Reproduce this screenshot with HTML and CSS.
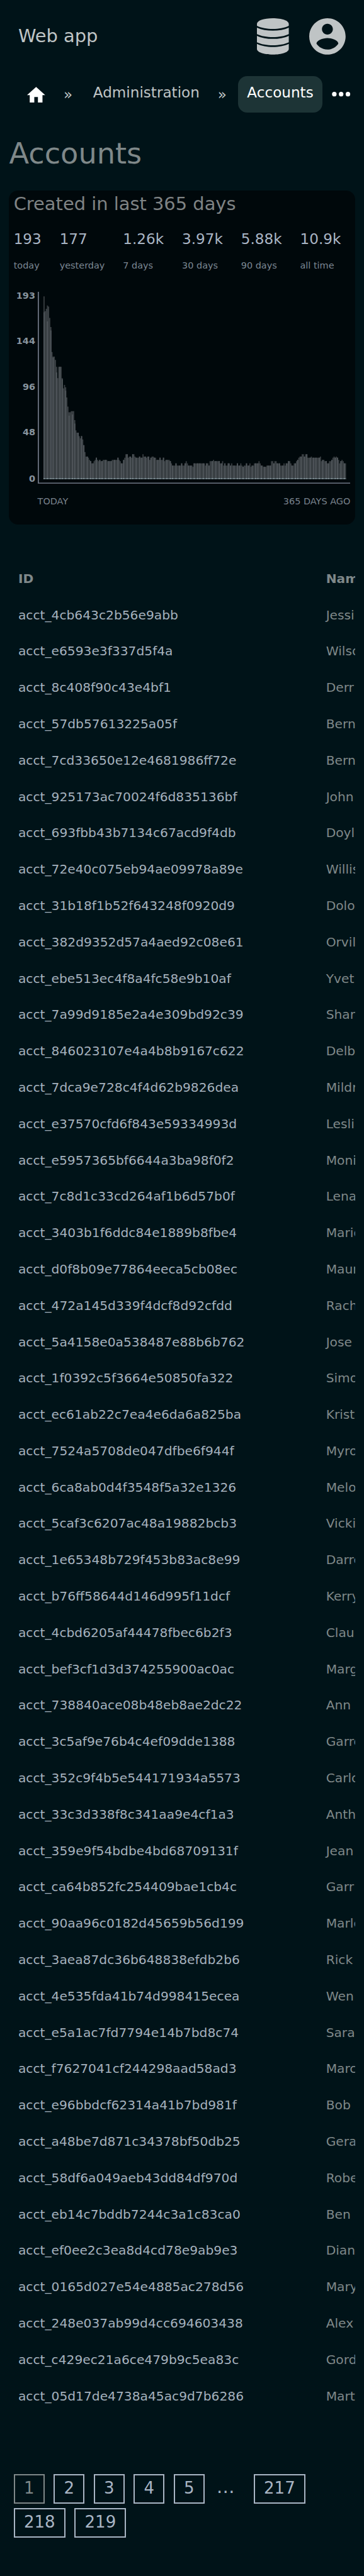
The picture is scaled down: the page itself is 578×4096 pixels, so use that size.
FILE: index.html
```html
<!DOCTYPE html>
<html lang="en">
<head>
<meta charset="utf-8">
<title>Accounts</title>
<link rel="stylesheet" href="styles.css">
</head>
<body>
<header class="topbar">
  <a class="brand">Web app</a>
  <nav class="topbar-icons">
    <svg class="icon-db" viewBox="0 0 56 64"><path d="M0 10C0 4.200 12 0 28 0s28 4.200 28 10v3.300C49 17 38 18.800 28 18.800S7 17 0 13.300zM0 16.600C8 20.300 18 21.900 28 21.900s20-1.600 28-5.300v11.300C49 31.400 38 33.200 28 33.200S7 31.400 0 27.900zM0 30.900C8 34.800 18 36.400 28 36.400s20-1.600 28-5.500v11.500C49 45.900 38 47.700 28 47.700S7 45.900 0 42.400zM0 45.200C8 49.100 18 50.700 28 50.700s20-1.600 28-5.500V54c0 5.800-12 10-28 10S0 59.800 0 54z"/></svg>
    <svg class="icon-user" viewBox="2 2 20 20"><path d="M12 2C6.480 2 2 6.480 2 12s4.480 10 10 10 10-4.480 10-10S17.520 2 12 2zm0 3c1.660 0 3 1.340 3 3s-1.340 3-3 3-3-1.340-3-3 1.340-3 3-3zm0 14.200c-2.500 0-4.710-1.280-6-3.220.030-1.990 4-3.080 6-3.080 1.990 0 5.970 1.090 6 3.080-1.290 1.940-3.500 3.220-6 3.220z"/></svg>
  </nav>
</header>
<nav class="crumbs">
  <a class="crumb-home"><svg viewBox="0 0 24 24"><path d="M10 20v-6h4v6h5v-8h3L12 3 2 12h3v8z"/></svg></a>
  <span class="sep">»</span>
  <a class="crumb">Administration</a>
  <span class="sep">»</span>
  <a class="crumb current">Accounts</a>
  <svg class="more" viewBox="0 0 24 24"><circle cx="6" cy="12" r="2"/><circle cx="12" cy="12" r="2"/><circle cx="18" cy="12" r="2"/></svg>
</nav>
<h1 class="title">Accounts</h1>
<section class="card">
  <h2 class="card-title">Created in last 365 days</h2>
  <div class="stats">
    <div class="stat"><b>193</b><span>today</span></div>
    <div class="stat"><b>177</b><span>yesterday</span></div>
    <div class="stat"><b>1.26k</b><span>7 days</span></div>
    <div class="stat"><b>3.97k</b><span>30 days</span></div>
    <div class="stat"><b>5.88k</b><span>90 days</span></div>
    <div class="stat"><b>10.9k</b><span>all time</span></div>
  </div>
  <div class="chart">
    <div class="y-labels"><span>193</span><span>144</span><span>96</span><span>48</span><span>0</span></div>
    <svg class="plot" id="plot" viewBox="0 0 550 338"></svg>
  </div>
  <div class="x-labels"><span>TODAY</span><span>365 DAYS AGO</span></div>
</section>
<div class="table-wrap">
<table class="table">
<thead><tr><th>ID</th><th>Name</th></tr></thead>
<tbody>
<tr><td>acct_4cb643c2b56e9abb</td><td>Jessi</td></tr>
<tr><td>acct_e6593e3f337d5f4a</td><td>Wilson</td></tr>
<tr><td>acct_8c408f90c43e4bf1</td><td>Derr</td></tr>
<tr><td>acct_57db57613225a05f</td><td>Bern</td></tr>
<tr><td>acct_7cd33650e12e4681986ff72e</td><td>Bern</td></tr>
<tr><td>acct_925173ac70024f6d835136bf</td><td>John</td></tr>
<tr><td>acct_693fbb43b7134c67acd9f4db</td><td>Doyl</td></tr>
<tr><td>acct_72e40c075eb94ae09978a89e</td><td>Willis</td></tr>
<tr><td>acct_31b18f1b52f643248f0920d9</td><td>Dolo</td></tr>
<tr><td>acct_382d9352d57a4aed92c08e61</td><td>Orvil</td></tr>
<tr><td>acct_ebe513ec4f8a4fc58e9b10af</td><td>Yvet</td></tr>
<tr><td>acct_7a99d9185e2a4e309bd92c39</td><td>Shar</td></tr>
<tr><td>acct_846023107e4a4b8b9167c622</td><td>Delb</td></tr>
<tr><td>acct_7dca9e728c4f4d62b9826dea</td><td>Mildr</td></tr>
<tr><td>acct_e37570cfd6f843e59334993d</td><td>Lesli</td></tr>
<tr><td>acct_e5957365bf6644a3ba98f0f2</td><td>Moni</td></tr>
<tr><td>acct_7c8d1c33cd264af1b6d57b0f</td><td>Lena</td></tr>
<tr><td>acct_3403b1f6ddc84e1889b8fbe4</td><td>Mario</td></tr>
<tr><td>acct_d0f8b09e77864eeca5cb08ec</td><td>Maur</td></tr>
<tr><td>acct_472a145d339f4dcf8d92cfdd</td><td>Rach</td></tr>
<tr><td>acct_5a4158e0a538487e88b6b762</td><td>Jose</td></tr>
<tr><td>acct_1f0392c5f3664e50850fa322</td><td>Simo</td></tr>
<tr><td>acct_ec61ab22c7ea4e6da6a825ba</td><td>Krist</td></tr>
<tr><td>acct_7524a5708de047dfbe6f944f</td><td>Myro</td></tr>
<tr><td>acct_6ca8ab0d4f3548f5a32e1326</td><td>Melo</td></tr>
<tr><td>acct_5caf3c6207ac48a19882bcb3</td><td>Vicki</td></tr>
<tr><td>acct_1e65348b729f453b83ac8e99</td><td>Darre</td></tr>
<tr><td>acct_b76ff58644d146d995f11dcf</td><td>Kerry</td></tr>
<tr><td>acct_4cbd6205af44478fbec6b2f3</td><td>Clau</td></tr>
<tr><td>acct_bef3cf1d3d374255900ac0ac</td><td>Marg</td></tr>
<tr><td>acct_738840ace08b48eb8ae2dc22</td><td>Ann</td></tr>
<tr><td>acct_3c5af9e76b4c4ef09dde1388</td><td>Garre</td></tr>
<tr><td>acct_352c9f4b5e544171934a5573</td><td>Carlo</td></tr>
<tr><td>acct_33c3d338f8c341aa9e4cf1a3</td><td>Anth</td></tr>
<tr><td>acct_359e9f54bdbe4bd68709131f</td><td>Jean</td></tr>
<tr><td>acct_ca64b852fc254409bae1cb4c</td><td>Garr</td></tr>
<tr><td>acct_90aa96c0182d45659b56d199</td><td>Marle</td></tr>
<tr><td>acct_3aea87dc36b648838efdb2b6</td><td>Rick</td></tr>
<tr><td>acct_4e535fda41b74d998415ecea</td><td>Wen</td></tr>
<tr><td>acct_e5a1ac7fd7794e14b7bd8c74</td><td>Sara</td></tr>
<tr><td>acct_f7627041cf244298aad58ad3</td><td>Marc</td></tr>
<tr><td>acct_e96bbdcf62314a41b7bd981f</td><td>Bob</td></tr>
<tr><td>acct_a48be7d871c34378bf50db25</td><td>Gera</td></tr>
<tr><td>acct_58df6a049aeb43dd84df970d</td><td>Robe</td></tr>
<tr><td>acct_eb14c7bddb7244c3a1c83ca0</td><td>Ben</td></tr>
<tr><td>acct_ef0ee2c3ea8d4cd78e9ab9e3</td><td>Dian</td></tr>
<tr><td>acct_0165d027e54e4885ac278d56</td><td>Mary</td></tr>
<tr><td>acct_248e037ab99d4cc694603438</td><td>Alex</td></tr>
<tr><td>acct_c429ec21a6ce479b9c5ea83c</td><td>Gord</td></tr>
<tr><td>acct_05d17de4738a45ac9d7b6286</td><td>Mart</td></tr>
</tbody>
</table>
</div>
<nav class="pages">
  <a class="page active">1</a><a class="page">2</a><a class="page">3</a><a class="page">4</a><a class="page">5</a><span class="dots">…</span><a class="page">217</a><a class="page">218</a><a class="page">219</a>
</nav>
<script src="chart.js"></script>
</body>
</html>
```

FILE: styles.css
```css
/* 1rem is ten layout units */
html { font-size: 18.0625px; background: #001318; }
body { margin: 0; font-family: "DejaVu Sans", sans-serif; color: #7f8889; overflow-x: hidden; }
svg { display: block; flex: none; }
h1, h2 { margin: 0; font-weight: 400; }

.topbar { display: flex; justify-content: space-between; align-items: center; height: 6.4rem; padding: 0 1.6rem; }
.brand { padding-bottom: 0.1rem; font-size: 1.6rem; color: #bfc4c5; }
.topbar-icons { display: flex; gap: 1.8rem; fill: #bfc4c5; }
.icon-db { width: 2.8rem; height: 3.2rem; }
.icon-user { width: 3.2rem; height: 3.2rem; }

.crumbs { display: flex; align-items: center; height: 3.2rem; margin-top: 0.3rem; padding-left: 1.6rem; font-size: 1.28rem; color: #bfc4c5; }
.crumb-home { padding: 0.14rem 0.64rem 0; }
.crumb-home svg { width: 1.92rem; height: 1.92rem; fill: #fff; }
.sep { margin: 0 1rem 0 0.8rem; }
.crumb { height: 3.2rem; box-sizing: border-box; line-height: 2.9rem; padding: 0 0.8rem; border-radius: 0.8rem; }
.current { background: #1d3436; color: #fff; }
.more { width: 2.4rem; height: 2.4rem; margin-left: 0.43rem; fill: #fff; }

.title { margin: 1.6rem 0.8rem 1.3rem; font-size: 2.56rem; line-height: 4rem; }

.card { height: 29.4rem; margin: 0 0.8rem; padding: 0 0.4rem; box-sizing: border-box; border-radius: 0.8rem; background: #00080b; }
.card-title { font-size: 1.6rem; line-height: 2.4rem; color: #7f8384; }
.stats { display: flex; gap: 1.6rem; margin-top: 0.76rem; }
.stat { display: flex; flex-direction: column; }
.stat b { font-weight: 400; font-size: 1.28rem; line-height: 2.3rem; color: #a9b5c4; }
.stat span { font-size: 0.8rem; line-height: 2.25rem; color: #7b8793; }
.chart { display: flex; margin-top: 1.19rem; }
.y-labels { width: 1.9rem; margin-right: 0.2rem; display: grid; grid-template-rows: 4rem 4rem 4rem 4.1rem 0.8rem; text-align: right; font-weight: 700; font-size: 0.8rem; line-height: 0.76rem; height: 16.9rem; color: #87939d; }
.plot { width: 27.5rem; height: 16.9rem; }
.axis { fill: #6b7280; }
.bar { fill: #383e42; }
.overlap { fill: #50565b; }
.foot { fill: #59666d; }
.foot-overlap { fill: #879499; }
.x-labels { display: flex; justify-content: space-between; margin: 0.9rem 0 0 2.1rem; font-size: 0.8rem; line-height: 1.25rem; color: #78828d; }

.table-wrap { margin: 3.15rem 0.8rem 0; overflow: hidden; }
.table { width: 40rem; table-layout: fixed; border-collapse: collapse; font-size: 1.12rem; }
.table th, .table td { height: 3.2rem; padding: 0 0 0 0.8rem; text-align: left; box-sizing: border-box; white-space: nowrap; line-height: 1.6rem; }
.table th:first-child { width: 27.06rem; }
.table td:first-child { color: #a5b1bd; }

.pages { display: flex; flex-wrap: wrap; gap: 0.4rem 0.8rem; margin: 5.25rem 0.8rem 0 1.2rem; padding-bottom: 3.2rem; font-size: 1.44rem; color: #a9b5c4; }
.page { height: 2.6rem; box-sizing: border-box; padding: 0 0.79rem; border: 2px solid; line-height: 2.29rem; }
.active { color: #7f8889; }
.dots { width: 2.1rem; margin: 0 0.37rem 0 0.25rem; font-size: 1.6rem; line-height: 2.3rem; }
```

FILE: chart.js
```js
// Bar heights from today backwards, as "height" or "height*repeat".
const runs = `161 148 150 153 152 142 134 112 108*2 105 99 89 99*3 89 80 83 81 72 64 59*2 60*3 52 43 41*2 38 36 38 35 30 24
20*2 19 17 16 14*2 16 17 19 17 16 17 16*2 17*4 16*4 17*5 19 17 16 14*2 17 19 22*2 19 20*2 19 22*2 20 19*3 20 19*2
22 20*2 19 20*2 17 19 20*2 19*2 17*3 19 17*2 19 16 17*4 16 14 12*3 14 12*4 14 12*2 14 16 14 12*4 11 14*10 12 14*2 12
16*3 17 16*5 14*2 16 12 14 12*2 14*2 12 14 12*4 14 12*2 14 12 11 12*2 14 12*2 14 11 12*2 14*4 16 14 12*2 11*3 12*4
16*2 14 16*2 14*3 12*3 14 12 14*2 16*2 14 12*2 14*2 16 17 19 20*2 22*2 20 22*2 19*3 20 19*7 20 16 17*2 16*2 14*2
16*2 17 19 20 19 20 19 17 14 16 17 16 14*2`;
const heights = runs.trim().split(/\s+/).flatMap(r => {
  const [h, n = 1] = r.split('*').map(Number);
  return Array(n).fill(h);
});
// Tops of overlapping bars that differ from the taller bar.
const lower = { 0: 147, 3: 139, 6: 131, 8: 107, 11: 94, 16: 88, 19: 78, 22: 56, 25: 57, 27: 49 };
const plot = document.getElementById('plot');
const rect = (cls, x, y, w, h) => `<rect class="${cls}" x="${x}" y="${y}" width="${w}" height="${h}"/>`;
const base = 330;
const left = 10;
const step = 532 / heights.length;
let outline = `M${left} ${base}`;
heights.forEach((h, i) => {
  outline += `V${base - h * 2}H${left + (i + 1) * step}`;
});
let out = `<path class="bar" d="${outline}V${base}z"/>` + rect('foot', left, base - 2, 532, 2);
for (let k = 0; k < 99; k++) {
  const c = Math.max(0, Math.ceil(k * 2.687 - 0.15));
  const h = Math.min(lower[c] || heights[c], heights[c]);
  out += rect('overlap', left + c * step, base - h * 2, step, h * 2 - 2);
  out += rect('foot-overlap', left + c * step, base - 2, step, 2);
}
out += rect('axis', 0, 0, 2, 338) + rect('axis', 0, 336, 550, 2);
plot.innerHTML = out;
```
